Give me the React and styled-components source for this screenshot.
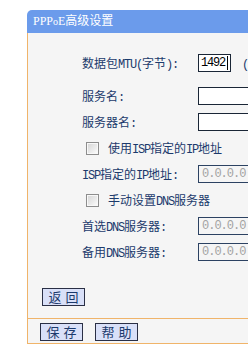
import React from "react";
import styled, { createGlobalStyle } from "styled-components";

const Global = createGlobalStyle`
  html, body { margin: 0; padding: 0; background: #ffffff; overflow: hidden; }
  body { font-family: "Noto Sans CJK SC", sans-serif; font-size: 12px; }
`;

const ORANGE = "#f0b46a";
const NAVY = "#1c3a6c";

const Page = styled.div`
  padding: 10px 0 0 27px;
  width: 600px;
`;

const Panel = styled.div`
  width: 560px;
`;

const TitleBar = styled.div`
  height: 23px;
  line-height: 23px;
  background: #6b9beb;
  border-top-left-radius: 5px;
  border-top-right-radius: 5px;
  color: #ffffff;
  padding-left: 6px;
  font-family: "Liberation Serif", "Noto Sans CJK SC", serif;
  font-size: 12px;
`;

const Small = styled.span`
  font-size: 10px;
`;

const Latin = styled.span`
  font-family: "Liberation Mono", monospace;
  font-size: 12px;
  letter-spacing: -1.2px;
`;

const Body = styled.div`
  background: #f5f5f5;
  border-left: 1px solid ${ORANGE};
  border-right: 1px solid ${ORANGE};
  padding: 17px 0 12px 0;
`;

const Form = styled.div`
  display: grid;
  grid-template-columns: 116px 1fr;
  padding-left: 54px;
`;

const Row = styled.div`
  display: contents;
`;

const Label = styled.div`
  height: 26px;
  margin-bottom: ${(p) => (p.$first ? "7px" : "0")};
  display: flex;
  align-items: center;
  color: ${NAVY};
  white-space: nowrap;
`;

const Cell = styled.div`
  height: 26px;
  margin-bottom: ${(p) => (p.$first ? "7px" : "0")};
  display: flex;
  align-items: center;
  white-space: nowrap;
  overflow: hidden;
`;

const CheckRow = styled.label`
  grid-column: 1 / span 2;
  height: 26px;
  display: flex;
  align-items: center;
  gap: 9px;
  padding-left: 4px;
  color: ${NAVY};
  white-space: nowrap;
`;

const Box = styled.span`
  width: 13px;
  height: 13px;
  flex: none;
  box-sizing: border-box;
  border: 1px solid #8d8d8d;
  background: linear-gradient(135deg, #d4d4d4 0%, #ececec 60%, #ffffff 100%);
  box-shadow: inset 0 0 0 1px #f8f8f8;
`;

const Field = styled.div`
  flex: none;
  box-sizing: border-box;
  height: 18px;
  width: ${(p) => p.$w}px;
  border: 1px solid ${(p) => (p.$disabled ? "#2c4262" : "#1a2636")};
  background: ${(p) => (p.$disabled ? "#f5f5f5" : "#ffffff")};
  color: ${(p) => (p.$disabled ? "#a3a3a3" : "#000000")};
  display: flex;
  align-items: center;
  padding-left: ${(p) => (p.$disabled ? "3px" : "2px")};
  font-family: "Liberation Mono", monospace;
  font-size: 12px;
  letter-spacing: ${(p) => (p.$disabled ? "-1px" : "-1.2px")};
`;

const Caret = styled.span`
  display: inline-block;
  width: 1px;
  height: 14px;
  background: #000;
  margin-left: 2px;
`;

const Hint = styled.span`
  color: ${NAVY};
  margin-left: 11px;
`;

const Button = styled.button`
  box-sizing: border-box;
  height: 18px;
  width: 43px;
  padding: 0;
  border: 1px solid #2a2f45;
  background: #d9e0f8;
  color: ${NAVY};
  font-family: "Noto Sans CJK SC", sans-serif;
  font-size: 13px;
  line-height: 16px;
  letter-spacing: 4px;
  text-indent: 4px;
  cursor: pointer;
`;

const BackWrap = styled.div`
  margin-top: 23px;
  padding-left: 14px;
`;

const Footer = styled.div`
  background: #f5f5f5;
  border: 1px solid ${ORANGE};
  padding: 4px 0 2px 12px;
  display: flex;
  gap: 12px;
`;

function Mix({ text }) {
  const parts = text.split(/([\x20-\x7e]+)/).filter(Boolean);
  return (
    <span>
      {parts.map((p, i) =>
        /^[\x20-\x7e]+$/.test(p) ? <Latin key={i}>{p}</Latin> : <React.Fragment key={i}>{p}</React.Fragment>
      )}
    </span>
  );
}

export default function App() {
  return (
    <>
      <Global />
      <Page>
        <Panel>
          <TitleBar>PPP<Small>o</Small>E高级设置</TitleBar>
          <Body>
            <Form>
              <Row>
                <Label $first><Mix text="数据包MTU(字节):" /></Label>
                <Cell $first>
                  <Field $w={33}>1492<Caret /></Field>
                  <Hint><Mix text="(" /></Hint>
                </Cell>
              </Row>
              <Row>
                <Label><Mix text="服务名:" /></Label>
                <Cell><Field $w={150} /></Cell>
              </Row>
              <Row>
                <Label><Mix text="服务器名:" /></Label>
                <Cell><Field $w={150} /></Cell>
              </Row>
              <CheckRow>
                <Box />
                <Mix text="使用ISP指定的IP地址" />
              </CheckRow>
              <Row>
                <Label><Mix text="ISP指定的IP地址:" /></Label>
                <Cell><Field $w={110} $disabled>0.0.0.0</Field></Cell>
              </Row>
              <CheckRow>
                <Box />
                <Mix text="手动设置DNS服务器" />
              </CheckRow>
              <Row>
                <Label><Mix text="首选DNS服务器:" /></Label>
                <Cell><Field $w={110} $disabled>0.0.0.0</Field></Cell>
              </Row>
              <Row>
                <Label><Mix text="备用DNS服务器:" /></Label>
                <Cell><Field $w={110} $disabled>0.0.0.0</Field></Cell>
              </Row>
            </Form>
            <BackWrap>
              <Button>返回</Button>
            </BackWrap>
          </Body>
          <Footer>
            <Button>保存</Button>
            <Button>帮助</Button>
          </Footer>
        </Panel>
      </Page>
    </>
  );
}
